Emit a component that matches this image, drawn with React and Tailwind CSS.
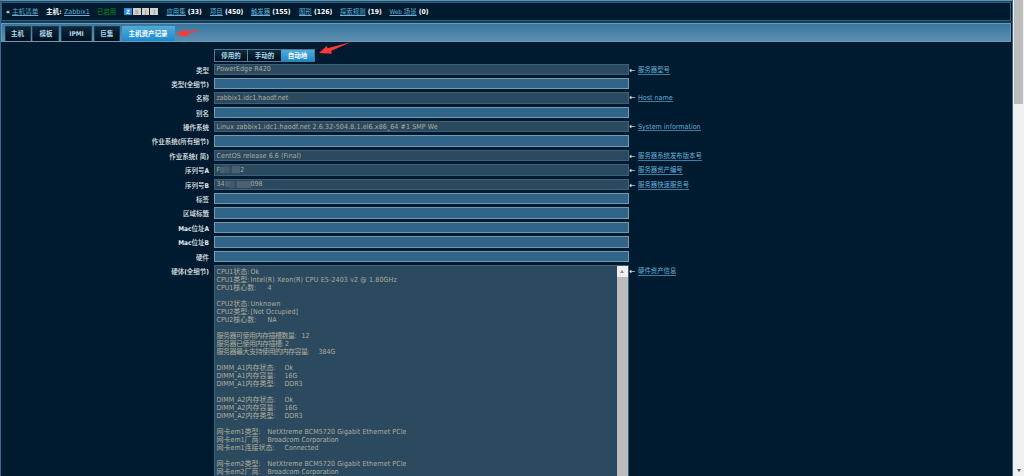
const counters = [
  ['应用集', '33', 'w-[43.5px]'],
  ['项目', '450', 'w-[41px]'],
  ['触发器', '155', 'w-[48px]'],
  ['图形', '126', 'w-[41px]'],
  ['探索规则', '19', 'w-[49.5px]'],
  ['Web 场景', '0', 'w-[60px]'],
];

const tabs = [
  ['主机', 'w-[26px]'],
  ['模板', 'w-[27px]'],
  ['IPMI', 'w-[30.5px]'],
  ['巨集', 'w-[26px]'],
];

const rows = [
  { label: '类型', value: 'PowerEdge R420', note: '服务器型号', spacing: 'tracking-[0.08px]' },
  { label: '类型(全细节)' },
  { label: '名称', value: 'zabbix1.idc1.haodf.net', note: 'Host name' },
  { label: '别名' },
  { label: '操作系统', value: 'Linux zabbix1.idc1.haodf.net 2.6.32-504.8.1.el6.x86_64 #1 SMP We', note: 'System information', spacing: 'tracking-[0.12px]' },
  { label: '作业系统(所有细节)' },
  { label: '作业系统( 简)', value: 'CentOS release 6.6 (Final)', note: '服务器系统发布版本号', spacing: 'tracking-[0.1px]' },
  { label: '序列号A', value: 'F', masked: 'w-[20px]', tail: '2', note: '服务器资产编号' },
  { label: '序列号B', value: '34', masked: 'w-[26px]', tail: '098', note: '服务器快速服务号' },
  { label: '标签' },
  { label: '区域标籤' },
  { label: 'Mac位址A' },
  { label: 'Mac位址B' },
  { label: '硬件' },
];

const details = [
  ['CPU1状态:', 'Ok', 'w-[34px]'],
  ['CPU1类型:', 'Intel(R) Xeon(R) CPU E5-2403 v2 @ 1.80GHz', 'w-[34px]', 'tracking-[0.15px]'],
  ['CPU1核心数:', '4', 'w-[51px]'],
  null,
  ['CPU2状态:', 'Unknown', 'w-[34px]', 'tracking-[0.12px]'],
  ['CPU2类型:', '[Not Occupied]', 'w-[34px]'],
  ['CPU2核心数:', 'NA', 'w-[51px]'],
  null,
  ['服务器可使用内存插槽数量:', '12', 'w-[85px] tracking-[-0.5px]'],
  ['服务器已使用内存插槽:', '2', 'w-[68.5px] tracking-[-0.5px]'],
  ['服务器最大支持使用的内存容量:', '384G', 'w-[102px] tracking-[-0.5px]'],
  null,
  ['DIMM_A1内存状态:', 'Ok', 'w-[68px]'],
  ['DIMM_A1内存容量:', '16G', 'w-[68px]'],
  ['DIMM_A1内存类型:', 'DDR3', 'w-[68px]'],
  null,
  ['DIMM_A2内存状态:', 'Ok', 'w-[68px]'],
  ['DIMM_A2内存容量:', '16G', 'w-[68px]'],
  ['DIMM_A2内存类型:', 'DDR3', 'w-[68px]'],
  null,
  ['网卡em1类型:', 'NetXtreme BCM5720 Gigabit Ethernet PCIe', 'w-[51px]', 'tracking-[0.08px]'],
  ['网卡em1厂商:', 'Broadcom Corporation', 'w-[51px]'],
  ['网卡em1连接状态:', 'Connected', 'w-[68px]'],
  null,
  ['网卡em2类型:', 'NetXtreme BCM5720 Gigabit Ethernet PCIe', 'w-[51px]', 'tracking-[0.08px]'],
  ['网卡em2厂商:', 'Broadcom Corporation', 'w-[51px]'],
];

function Note({ children }) {
  const latin = /^[A-Z]/.test(children);
  return (
    <div className={latin ? 'flex items-center pt-[2px]' : 'flex items-center pt-[3px]'}>
      <span className="ml-[1px] w-[8.5px] text-[8px] text-white">←</span>
      <span
        className={
          latin
            ? 'border-b border-[#3f7d9f] text-[7.1px] leading-[7px] text-[#69b0d8]'
            : 'border-b border-[#3f7d9f] text-[6.4px] leading-[7px] text-[#69b0d8]'
        }
      >
        {children}
      </span>
    </div>
  );
}

function Label({ children }) {
  return (
    <div className="w-[209px] shrink-0 pt-[3px] text-right text-[6.5px] font-medium text-[#e4e9ed]">
      {children.split(/([A-Za-z()]+)/).map((part, index) =>
        index % 2 ? <b key={index}>{part}</b> : part
      )}
    </div>
  );
}

function Field({ row }) {
  const readOnly = Boolean(row.value);
  return (
    <div className="flex h-[14.4px] items-start">
      <Label>{row.label}</Label>
      <div
        className={
          readOnly
            ? 'ml-[5px] flex h-[11.4px] w-[414.5px] shrink-0 items-center border border-[#3b617b] bg-[#2b495f] pl-[1.5px] text-[#b2ae9b]'
            : 'ml-[5px] flex h-[11.4px] w-[414.5px] shrink-0 items-center border border-[#7699ae] bg-[#306489]'
        }
      >
        <span className={row.spacing}>{row.value}</span>
        {row.masked && (
          <span className={`flex h-[8px] items-center ${row.masked}`}>
            <span className="h-[6px] w-[4px] bg-[#4a6070]" />
            <span className="h-[7px] w-[5px] bg-[#435a6a]" />
            <span className="h-[6px] w-[3px] bg-[#384f61]" />
            <span className="h-[7px] flex-1 bg-[#4b6171]" />
          </span>
        )}
        <span>{row.tail}</span>
      </div>
      {row.note && <Note>{row.note}</Note>}
    </div>
  );
}

export default function App() {
  return (
    <div className="relative flex h-[476px] w-[1024px] overflow-hidden bg-[#001b2f] font-['DejaVu_Sans_Condensed','DejaVu_Sans','Noto_Sans_CJK_SC',sans-serif] text-[7px] leading-[8px] whitespace-pre text-white [font-stretch:condensed]">
      <div className="flex w-[1013px] flex-col border-x border-[#34698c]">
        <div className="h-[2px] shrink-0 border-b border-[#214963] bg-[#5692b5]" />
        <header className="mr-px flex h-[19px] shrink-0 items-center border border-[#2d5d7c] pl-[4px] text-[6.6px]">
          <span className="w-[6px] font-bold">«</span>
          <span className="w-[34px] text-[#69a7cb] underline">主机清单</span>
          <span className="w-[18px] font-bold">主机:</span>
          <span className="w-[33px] text-[7px] text-[#69b0d8] underline">Zabbix1</span>
          <span className="w-[27px] text-[6.4px] text-[#078f16]">已启用</span>
          <span className="mr-[8.3px] flex gap-[1px] text-center text-[6px] leading-[7px] font-bold">
            <span className="w-[7.8px] bg-[#268ce4]">Z</span>
            <span className="w-[7.8px] bg-[#d4d2cd] text-[#a5a5a5]">S</span>
            <span className="w-[7.8px] bg-[#d4d2cd] text-[#a5a5a5]">J</span>
            <span className="w-[7.8px] bg-[#d4d2cd] text-[#a5a5a5]">I</span>
          </span>
          {counters.map(([name, total, width]) => (
            <span key={name} className={`shrink-0 ${width}`}>
              <span className="text-[6.4px] text-[#69b0d8] underline">{name}</span>
              <b className="text-[6.8px]"> ({total})</b>
            </span>
          ))}
        </header>
        <div className="h-[2px] shrink-0 bg-[#173a52]" />
        <nav className="mr-px flex h-[19px] shrink-0 items-end gap-[1.9px] border border-[#689bb9] bg-linear-to-b from-[#3976a0] to-[#5d8fae] pl-[2.5px] text-[6.5px] font-bold">
          {tabs.map(([name, width]) => (
            <span key={name} className={`flex h-[15px] items-center justify-center border border-b-0 border-[#163c54] bg-linear-to-b from-[#132636] to-[#00101d] text-[#a9d8ef] ${width}`}>
              {name}
            </span>
          ))}
          <span className="flex h-[15px] w-[53px] items-center justify-center bg-linear-to-b from-[#50abd6] to-[#168bd0]">主机资产记录</span>
        </nav>
        <main className="flex flex-col pt-[7px]">
          <div className="ml-[213px] flex h-[13px] w-[101px] shrink-0 border border-[#477b99] text-[6.5px] font-bold">
            <span className="flex w-[33px] items-center justify-center border-r border-[#5b8aa5] bg-linear-to-b from-[#142b3d] to-[#00101d] text-[#a9d8ef]">停用的</span>
            <span className="flex w-[33px] items-center justify-center bg-linear-to-b from-[#142b3d] to-[#00101d] text-[#a9d8ef]">手动的</span>
            <span className="flex flex-1 items-center justify-center bg-linear-to-b from-[#50abd6] to-[#168bd0]">自动地</span>
          </div>
          <div className="-ml-px flex flex-col pt-[1.5px]">
            {rows.map((row) => <Field key={row.label} row={row} />)}
            <div className="flex items-start">
              <Label>硬体(全细节)</Label>
              <div className="ml-[5px] flex h-[230px] w-[414.5px] shrink-0 justify-between border border-[#3b617b] bg-[#2b495f] text-[#b2ae9b]">
                <div className="pt-[2px] pl-[1.5px]">
                  {details.map((line, index) => (
                    <div key={index} className="flex h-[8px]">
                      {line && <span className={`shrink-0 ${line[2]}`}>{line[0]}</span>}
                      {line && <span className={line[3]}>{line[1]}</span>}
                    </div>
                  ))}
                </div>
                <div className="w-[11px] bg-[#bcbcbc]">
                  <div className="flex h-[11px] items-center justify-center bg-[#f0f0f0]">
                    <svg width="4" height="3" viewBox="0 0 4 3"><path d="M0 3 2 0l2 3z" fill="#8a8a8a" /></svg>
                  </div>
                </div>
              </div>
              <Note>硬件资产信息</Note>
            </div>
          </div>
        </main>
      </div>
      <aside className="flex flex-1 flex-col justify-between bg-[#f0f0f0] pl-[1px]">
        <div className="h-[104px] w-[9px] bg-[#bcbcbc]" />
        <svg className="mb-[4px] ml-[3px]" width="4" height="3" viewBox="0 0 4 3"><path d="M0 0h4L2 3z" fill="#505050" /></svg>
      </aside>
      <svg className="absolute top-[28px] left-[174px]" width="27" height="10" viewBox="0 0 27 10">
        <path d="M2 6 12 1 10.5 3.2 26 2 13 6.5 14 9z" fill="#ff3937" />
      </svg>
      <svg className="absolute top-[42px] left-[318px]" width="34" height="13" viewBox="0 0 34 13">
        <path d="M1 11 9 3.8 9.5 6.2 33 0 13 9 14 11.8z" fill="#ff3937" />
      </svg>
    </div>
  );
}
